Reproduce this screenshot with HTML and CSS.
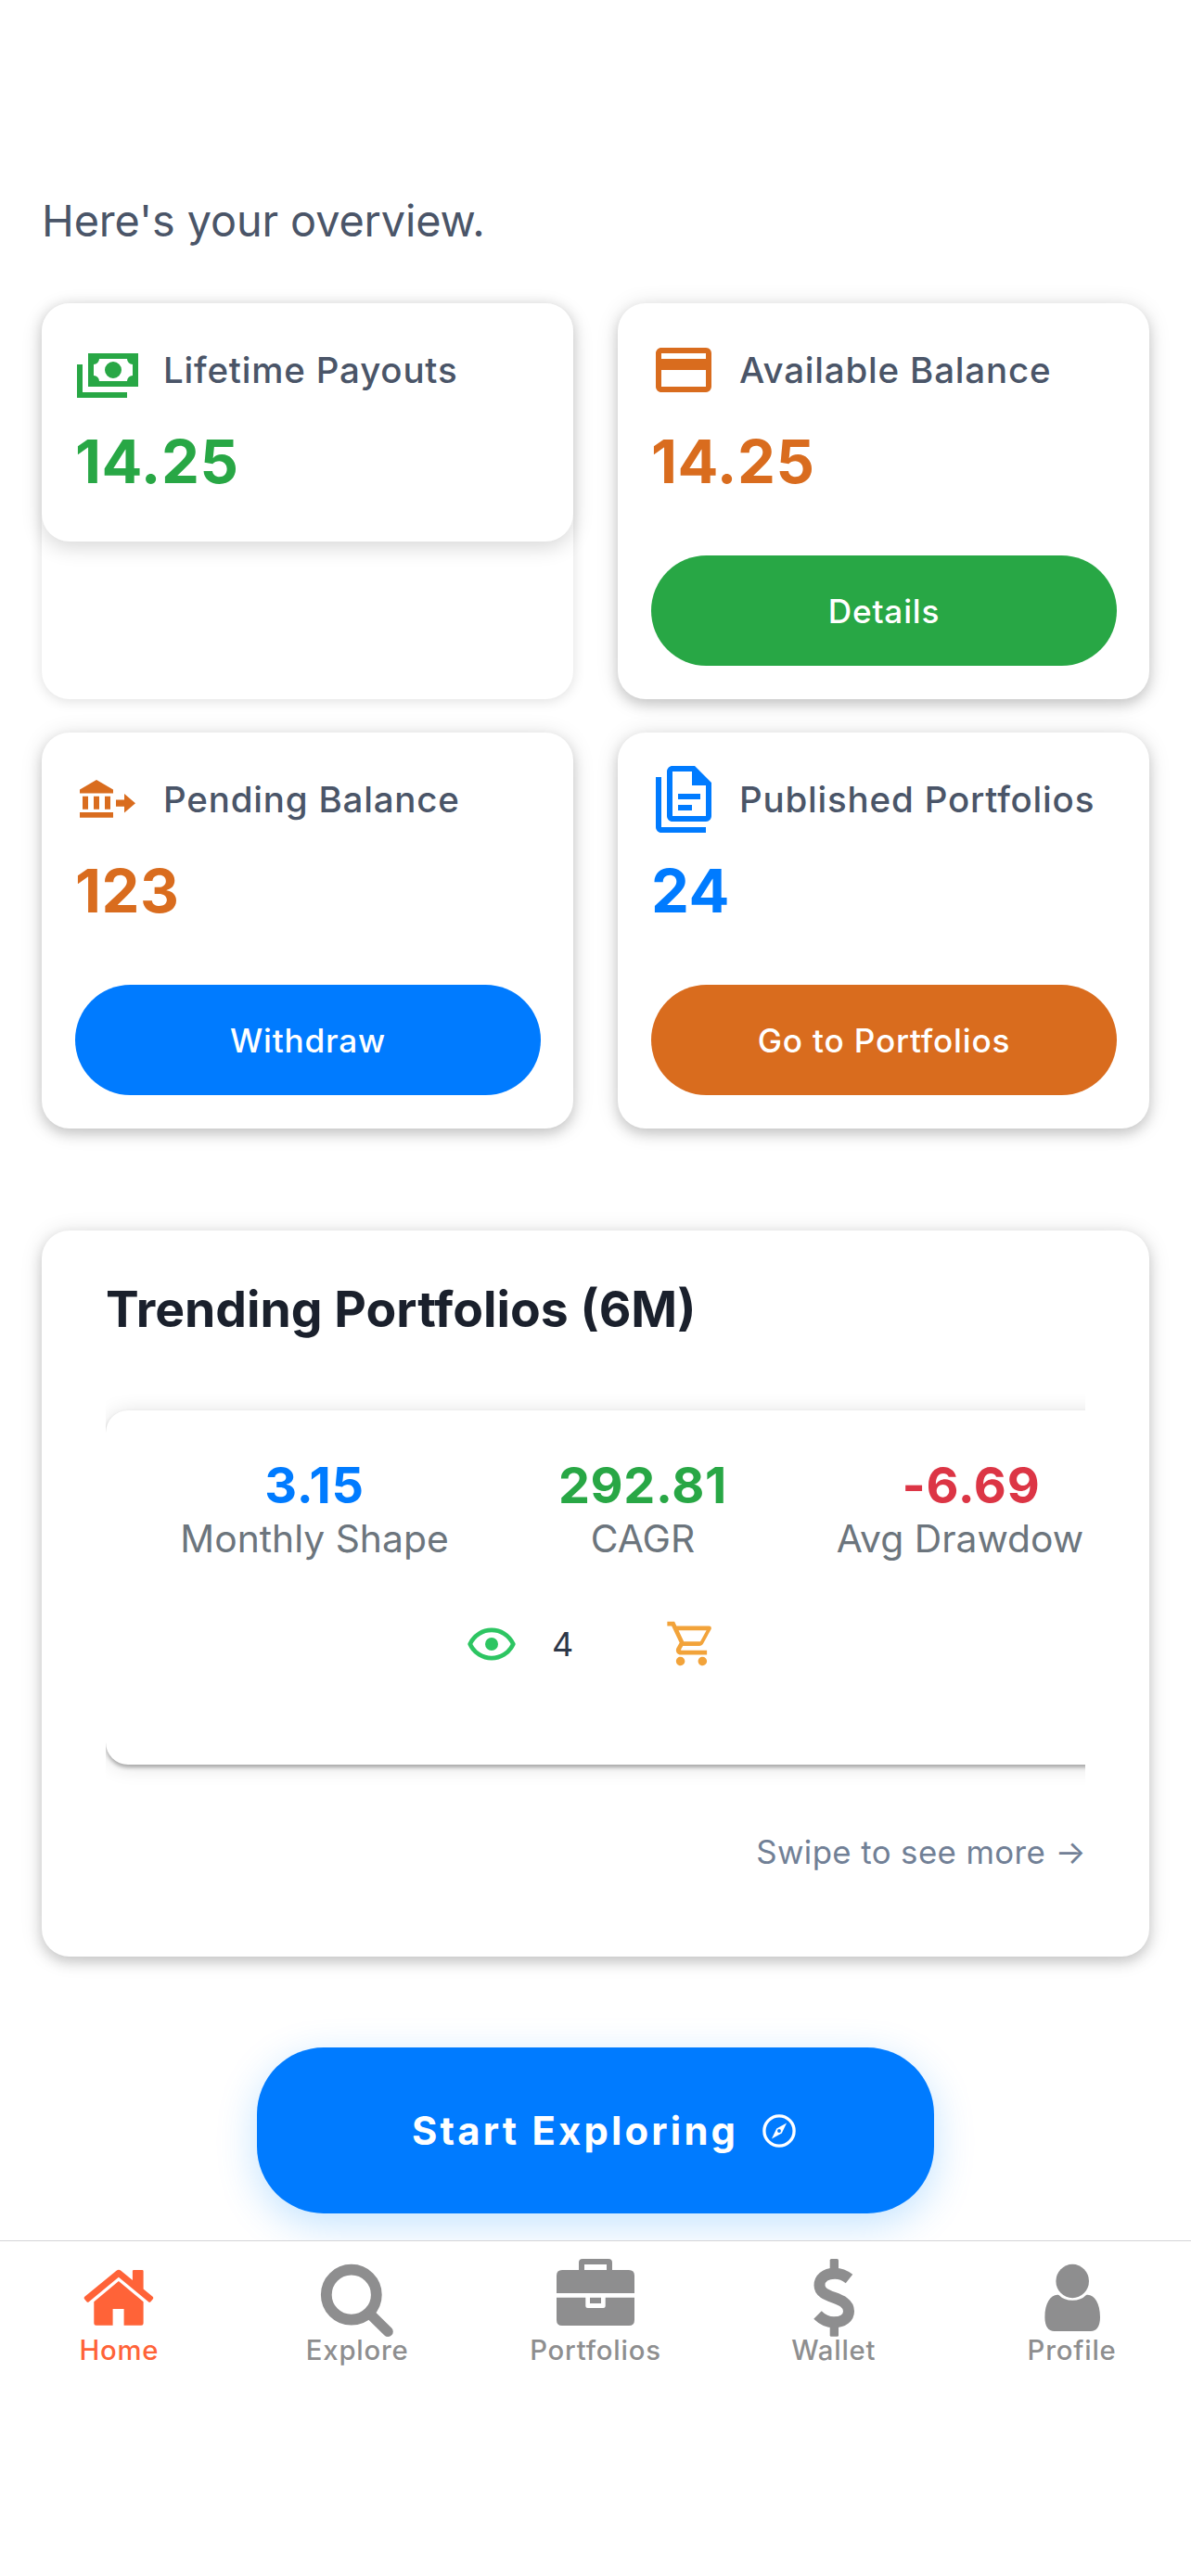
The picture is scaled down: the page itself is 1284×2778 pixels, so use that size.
FILE: index.html
```
<!DOCTYPE html>
<html lang="en">
<head>
    <meta charset="UTF-8" />
    <meta name="viewport" content="width=device-width, initial-scale=1" />
    <title>Home</title>
    <link rel="stylesheet" href="styles.css">
</head>
<body>

    <main class="screen">
        <p class="overview">Here's your overview.</p>

        <div class="cards">
            <div class="card-wrap">
                <div class="card">
                    <div class="card-head">
                        <svg class="icon green" viewBox="0 0 24 24"><path d="M5,6H23V18H5V6M14,9A3,3 0 0,1 17,12A3,3 0 0,1 14,15A3,3 0 0,1 11,12A3,3 0 0,1 14,9M9,8A2,2 0 0,1 7,10V14A2,2 0 0,1 9,16H19A2,2 0 0,1 21,14V10A2,2 0 0,1 19,8H9M1,10H3V20H19V22H1V10Z"/></svg>
                        <span class="label">Lifetime Payouts</span>
                    </div>
                    <div class="value green">14.25</div>
                </div>
            </div>

            <div class="card">
                <div class="card-head">
                    <svg class="icon orange" viewBox="0 0 24 24"><path d="M20,8H4V6H20M20,18H4V12H20M20,4H4C2.89,4 2,4.89 2,6V18C2,19.1 2.9,20 4,20H20A2,2 0 0,0 22,18V6C22,4.89 21.1,4 20,4Z"/></svg>
                    <span class="label">Available Balance</span>
                </div>
                <div class="value orange">14.25</div>
                <button class="btn btn-green">Details</button>
            </div>

            <div class="card">
                <div class="card-head">
                    <svg class="icon orange" viewBox="0 0 24 24"><path d="M2,8.5V9.8H14V8.5L8,5M3,10.9H5V15.6H3M7,10.9H9V15.6H7M11,10.9H13V15.6H11M2,16.7V18.6H14V16.7M15,12.2V14.6H18V16.8L22,13.4L18,10V12.2Z"/></svg>
                    <span class="label">Pending Balance</span>
                </div>
                <div class="value orange">123</div>
                <button class="btn btn-blue">Withdraw</button>
            </div>

            <div class="card">
                <div class="card-head">
                    <svg class="icon blue" viewBox="0 0 24 24"><path d="M16 0H8C6.9 0 6 .9 6 2V18C6 19.1 6.9 20 8 20H20C21.1 20 22 19.1 22 18V6L16 0M20 18H8V2H15V7H20V18M4 4V22H20V24H4C2.9 24 2 23.1 2 22V4H4M10 10V12H18V10H10M10 14V16H15V14H10Z"/></svg>
                    <span class="label">Published Portfolios</span>
                </div>
                <div class="value blue">24</div>
                <button class="btn btn-orange">Go to Portfolios</button>
            </div>
        </div>

        <section class="trending">
            <h2>Trending Portfolios (6M)</h2>
            <div class="scroller">
                <div class="portfolio">
                    <div class="stats">
                        <div class="stat">
                            <div class="stat-value blue">3.15</div>
                            <div class="stat-label">Monthly Shape</div>
                        </div>
                        <div class="stat">
                            <div class="stat-value green">292.81</div>
                            <div class="stat-label">CAGR</div>
                        </div>
                        <div class="stat">
                            <div class="stat-value red">-6.69</div>
                            <div class="stat-label">Avg Drawdown</div>
                        </div>
                    </div>
                    <div class="actions">
                        <svg class="eye" viewBox="0 0 24 24"><path d="M2 12C4 7.7 8 5.5 12 5.5s8 2.2 10 6.5c-2 4.3-6 6.5-10 6.5S4 16.3 2 12Z"/><circle cx="12" cy="12" r="3"/></svg>
                        <span class="views">4</span>
                        <svg class="cart" viewBox="0 0 24 24"><path d="M17,18A2,2 0 0,1 19,20A2,2 0 0,1 17,22C15.89,22 15,21.1 15,20C15,18.89 15.89,18 17,18M1,2H4.27L5.21,4H20A1,1 0 0,1 21,5C21,5.17 20.95,5.34 20.88,5.5L17.3,11.97C16.96,12.58 16.3,13 15.55,13H8.1L7.2,14.63L7.17,14.75A0.25,0.25 0 0,0 7.42,15H19V17H7C5.89,17 5,16.1 5,15C5,14.65 5.09,14.32 5.24,14.04L6.6,11.59L3,4H1V2M7,18A2,2 0 0,1 9,20A2,2 0 0,1 7,22C5.89,22 5,21.1 5,20C5,18.89 5.89,18 7,18M16,11L18.78,6H6.14L8.5,11H16Z"/></svg>
                    </div>
                </div>
            </div>
            <p class="swipe">Swipe to see more →</p>
        </section>

        <button class="explore-btn">
            <span>Start Exploring</span>
            <svg class="compass" viewBox="0 0 24 24"><circle cx="12" cy="12" r="9.2"/><path d="M16.6 7.2L13.6 13.4L7.4 16.8L10.4 10.6ZM12 10.9A1.1 1.1 0 0 0 12 13.1A1.1 1.1 0 0 0 12 10.9Z"/></svg>
        </button>
    </main>

    <nav class="tabs">
        <a class="tab active">
            <svg viewBox="0 0 84 84">
                <path d="M39.5 12.8Q42 10.8 44.4 12.8L56.9 23V13.2Q56.9 12 58.1 12H67.4Q68.6 12 68.6 13.2V32.5L78.6 40.7Q80 42 78.9 43.3L76.4 46.2Q75.3 47.2 74 46.2L41.9 19.8L9.9 46.2Q8.6 47.2 7.5 46.2L5 43.3Q3.9 42 5.3 40.7Z"/>
                <path d="M41.9 24L68.6 46.2V69.5Q68.6 71.8 66.3 71.8H47.6V54H35.6V71.8H17.6Q15.3 71.8 15.3 69.5V46.2Z"/>
            </svg>
            <span>Home</span>
        </a>
        <a class="tab">
            <svg viewBox="0 0 84 84">
                <circle cx="35.8" cy="38.7" r="27" fill="none" stroke="currentColor" stroke-width="11.8"/>
                <path d="M57 60.5L75.3 78.5" stroke="currentColor" stroke-width="11" stroke-linecap="round"/>
            </svg>
            <span>Explore</span>
        </a>
        <a class="tab">
            <svg viewBox="0 0 84 84">
                <path d="M0 37V18Q0 12 6 12H24V4Q24 0 28 0H56Q60 0 60 4V12H78Q84 12 84 18V37ZM30 6V12H54V6Z" fill-rule="evenodd"/>
                <path d="M0 41.8H31.3V50.5Q31.3 53 33.8 53H50.2Q52.7 53 52.7 50.5V41.8H84V66Q84 72 78 72H6Q0 72 0 66Z"/>
                <path d="M36 41.8H48V48H36Z"/>
            </svg>
            <span>Portfolios</span>
        </a>
        <a class="tab">
            <svg viewBox="0 0 84 84">
                <path d="M58.5 21.5C53.5 17.5 48 15.7 43 15.7C32 15.7 26.5 21.5 26.5 28.5C26.5 44 58 39.5 58 56.5C58 63 52.5 68.3 42 68.3C35 68.3 29.5 65.5 24.5 60.5" fill="none" stroke="currentColor" stroke-width="12"/>
                <rect x="37.7" y="0" width="9.3" height="14" rx="1.5"/>
                <rect x="37.7" y="70" width="9.3" height="13.8" rx="1.5"/>
            </svg>
            <span>Wallet</span>
        </a>
        <a class="tab">
            <svg viewBox="0 0 84 84">
                <ellipse cx="42.2" cy="24" rx="17.8" ry="18.2"/>
                <path d="M27.5 39Q33 44.8 42.2 44.8Q51.5 44.8 57 39C65 37.5 72 47 72 63C72 73 68 78 62 78H22.5C16.5 78 12.4 73 12.4 63C12.4 47 19.5 37.5 27.5 39Z"/>
            </svg>
            <span>Profile</span>
        </a>
    </nav>

</body>
</html>
```
FILE: styles.css
```
* {
    box-sizing: border-box;
}
body {
    font-family: Inter, "Liberation Sans", sans-serif;
    background-color: #fff;
    margin: 0;
}
button {
    font-family: inherit;
    border: none;
    cursor: pointer;
}
svg {
    display: block;
    fill: currentColor;
    flex-shrink: 0;
}
.green {
    color: #28a745;
}
.orange {
    color: #d96c1e;
}
.blue {
    color: #007bff;
}
.red {
    color: #dc3545;
}

.screen {
    height: 2416px;
    padding: 208px 45px 0;
    overflow: hidden;
}
.overview {
    margin: 0 0 59px;
    font-size: 46.8px;
    line-height: 60px;
    letter-spacing: -0.1px;
    color: #4a5568;
}

/* Balance cards */
.cards {
    display: grid;
    grid-template-columns: 1fr 1fr;
    grid-auto-rows: 427px;
    gap: 36px 48px;
}
.card-wrap {
    border-radius: 30px;
    box-shadow: 0 2px 14px rgba(0,0,0,0.13);
}
.card {
    padding: 36px 35px 36px 36px;
    background-color: #fff;
    border-radius: 30px;
    box-shadow: 0 6px 14px rgba(0,0,0,0.16), 0 2px 24px rgba(0,0,0,0.12);
}
.card-wrap .card {
    height: 257px;
    box-shadow: 0 6px 22px rgba(0,0,0,0.16);
}
.card-head {
    display: flex;
    align-items: center;
    gap: 24px;
    height: 72px;
}
.icon {
    width: 72px;
    height: 72px;
    margin-left: -1px;
}
.label {
    font-size: 38.5px;
    font-weight: 500;
    letter-spacing: 0.8px;
    white-space: nowrap;
    color: #4a5568;
}
.value {
    margin-top: 24px;
    font-size: 65px;
    font-weight: 700;
    line-height: 78px;
    letter-spacing: 0.5px;
}
.btn {
    display: block;
    width: 100%;
    height: 119px;
    margin-top: 62px;
    padding: 0;
    border-radius: 60px;
    font-size: 35.2px;
    font-weight: 500;
    letter-spacing: 0.8px;
    color: #fff;
}
.btn-green {
    background-color: #28a745;
}
.btn-blue {
    background-color: #007bff;
}
.btn-orange {
    background-color: #d96c1e;
}

/* Trending portfolios */
.trending {
    height: 783px;
    margin-top: 110px;
    padding: 53px 69px 0;
    background-color: #fff;
    border-radius: 30px;
    box-shadow: 0 6px 14px rgba(0,0,0,0.16), 0 2px 24px rgba(0,0,0,0.12);
}
.trending h2 {
    margin: 0;
    font-size: 53.5px;
    font-weight: 700;
    line-height: 64px;
    letter-spacing: 0;
    color: #1a202c;
}
.scroller {
    margin-top: 41px;
    padding: 36px 0;
    overflow: hidden;
}
.portfolio {
    width: 1158px;
    height: 382px;
    padding: 50px 48px 0;
    background-color: #fff;
    border-radius: 24px;
    box-shadow: 0 3px 4px rgba(0,0,0,0.3), 0 2px 22px rgba(0,0,0,0.13);
}
.stats {
    display: grid;
    grid-template-columns: repeat(3, 1fr);
    text-align: center;
}
.stat-value {
    font-size: 54px;
    font-weight: 700;
    line-height: 62px;
    letter-spacing: 0.7px;
}
.stat-label {
    font-size: 40.8px;
    line-height: 52px;
    letter-spacing: 0;
    white-space: nowrap;
    color: #6c757d;
}
.actions {
    display: flex;
    align-items: center;
    margin-top: 59px;
    padding-left: 340px;
}
.eye {
    width: 56px;
    height: 56px;
    color: #2dc562;
}
.eye path {
    fill: none;
    stroke: currentColor;
    stroke-width: 2;
    stroke-linejoin: round;
}
.views {
    margin: 0 99px 0 37px;
    font-size: 36px;
    color: #2d3748;
}
.cart {
    width: 57px;
    height: 57px;
    color: #f2a33a;
}
.swipe {
    margin: 34px -1px 0 0;
    font-size: 34.8px;
    line-height: 48px;
    letter-spacing: 0.4px;
    text-align: right;
    color: #718096;
}

.explore-btn {
    display: flex;
    align-items: center;
    gap: 23px;
    width: 730px;
    height: 179px;
    margin: 98px auto 0;
    padding: 0 0 0 167px;
    border-radius: 72px;
    background-color: #007bff;
    box-shadow: 0 12px 44px rgba(0,140,255,0.24);
    font-size: 41.8px;
    font-weight: 700;
    letter-spacing: 3.2px;
    color: #fff;
}
.compass {
    width: 42px;
    height: 42px;
}
.compass circle {
    fill: none;
    stroke: currentColor;
    stroke-width: 1.9;
}

/* Bottom tab bar */
.tabs {
    position: relative;
    display: flex;
    height: 362px;
    padding-top: 19px;
    border-top: 1px solid #d4d4d6;
    background-color: #fff;
}
.tab {
    flex: 1;
    display: flex;
    flex-direction: column;
    align-items: center;
    color: #8e8e8f;
}
.tab.active {
    color: #ff6338;
}
.tab svg {
    width: 84px;
    height: 84px;
}
.tab span {
    margin-top: -3px;
    font-size: 29.3px;
    font-weight: 500;
    line-height: 36px;
    letter-spacing: 0.8px;
}
```
